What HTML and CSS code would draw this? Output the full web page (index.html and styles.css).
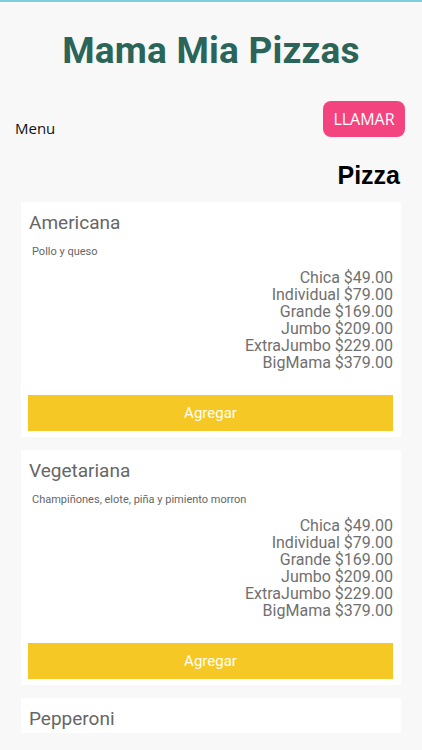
FILE: index.html
```html
<!DOCTYPE html>
<html lang="es">
<head>
  <meta charset="UTF-8">
  <meta name="viewport" content="width=device-width, initial-scale=1.0">
  <title>Mama Mia Pizzas</title>
  <link rel="stylesheet" href="styles.css">
</head>
<body>
  <h1 class="title">Mama Mia Pizzas</h1>

  <div class="menu-bar">
    <span class="menu-label">Menu</span>
    <button class="call-button">LLAMAR</button>
  </div>

  <h2 class="section">Pizza</h2>

  <div class="list">
    <div class="card">
      <div class="pizza-name">Americana</div>
      <div class="pizza-desc">Pollo y queso</div>
      <div class="prices">
        <div>Chica $49.00</div>
        <div>Individual $79.00</div>
        <div>Grande $169.00</div>
        <div>Jumbo $209.00</div>
        <div>ExtraJumbo $229.00</div>
        <div>BigMama $379.00</div>
      </div>
      <button class="add-button">Agregar</button>
    </div>

    <div class="card">
      <div class="pizza-name">Vegetariana</div>
      <div class="pizza-desc">Champiñones, elote, piña y pimiento morron</div>
      <div class="prices">
        <div>Chica $49.00</div>
        <div>Individual $79.00</div>
        <div>Grande $169.00</div>
        <div>Jumbo $209.00</div>
        <div>ExtraJumbo $229.00</div>
        <div>BigMama $379.00</div>
      </div>
      <button class="add-button">Agregar</button>
    </div>

    <div class="card card-short">
      <div class="pizza-name">Pepperoni</div>
    </div>
  </div>
</body>
</html>
```

FILE: styles.css
```css
body {
  margin: 0;
  background-color: #f8f8f8;
  border-top: 2px solid #7fcfd8;
  font-family: Roboto, 'Liberation Sans', sans-serif;
}

.title {
  margin: 28px 0 0 0;
  font-size: 37px;
  line-height: 42px;
  font-weight: bold;
  letter-spacing: 0.2px;
  text-align: center;
  color: #2b6459;
}

.menu-bar {
  display: flex;
  justify-content: space-between;
  align-items: flex-end;
  margin-top: 29px;
  padding: 0 17px 0 15px;
}

.menu-label {
  font-family: 'Open Sans', sans-serif;
  font-size: 15px;
  line-height: 18px;
  color: #111;
}

.call-button {
  height: 36px;
  width: 82px;
  padding: 0;
  border: none;
  border-radius: 8px;
  background-color: #f4447f;
  color: #fff;
  font-family: 'Open Sans', sans-serif;
  font-size: 16px;
}

.section {
  margin: 25px 22px 14px 0;
  font-family: 'Liberation Sans', sans-serif;
  font-size: 25px;
  line-height: 26px;
  font-weight: bold;
  text-align: right;
  color: #000;
}

.list {
  display: flex;
  flex-direction: column;
  gap: 13px;
  padding: 0 21px;
}

.card {
  background-color: #fff;
  padding: 10px 8px 6px 7px;
}

.card-short {
  padding-bottom: 3px;
}

.pizza-name {
  margin-left: 1px;
  font-size: 19px;
  line-height: 22px;
  color: #666;
}

.pizza-desc {
  margin: 11px 0 0 4px;
  font-size: 11px;
  line-height: 14px;
  color: #666;
}

.prices {
  margin-top: 10px;
  font-size: 16px;
  line-height: 17px;
  text-align: right;
  color: #707070;
}

.add-button {
  display: block;
  width: 100%;
  height: 36px;
  margin-top: 24px;
  border: none;
  background-color: #f6c825;
  color: #fff;
  font-family: Roboto, sans-serif;
  font-size: 15px;
}
```
